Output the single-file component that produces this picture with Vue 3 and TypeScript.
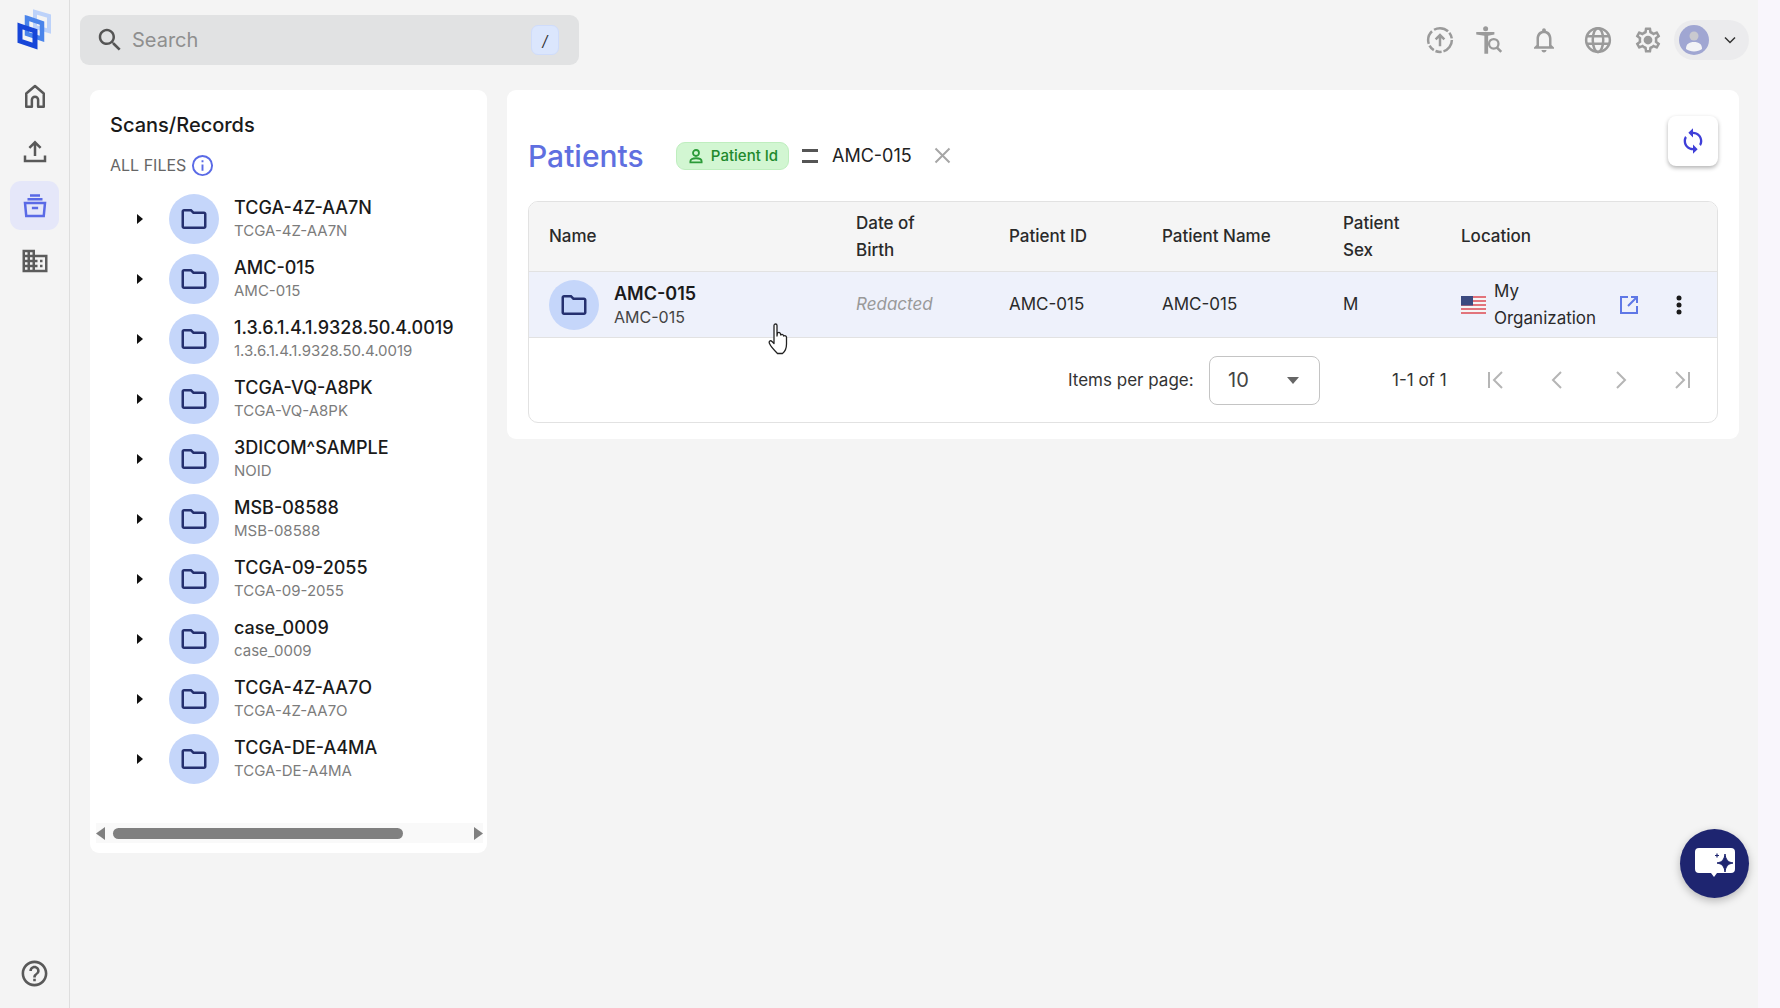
<script setup lang="ts">
interface TreeItem {
  title: string
  sub: string
}

const treeItems: TreeItem[] = [
  { title: 'TCGA-4Z-AA7N', sub: 'TCGA-4Z-AA7N' },
  { title: 'AMC-015', sub: 'AMC-015' },
  { title: '1.3.6.1.4.1.9328.50.4.0019', sub: '1.3.6.1.4.1.9328.50.4.0019' },
  { title: 'TCGA-VQ-A8PK', sub: 'TCGA-VQ-A8PK' },
  { title: '3DICOM^SAMPLE', sub: 'NOID' },
  { title: 'MSB-08588', sub: 'MSB-08588' },
  { title: 'TCGA-09-2055', sub: 'TCGA-09-2055' },
  { title: 'case_0009', sub: 'case_0009' },
  { title: 'TCGA-4Z-AA7O', sub: 'TCGA-4Z-AA7O' },
  { title: 'TCGA-DE-A4MA', sub: 'TCGA-DE-A4MA' },
]

const folderPath =
  'M20 6h-8l-2-2H4c-1.1 0-2 .9-2 2v12c0 1.1.9 2 2 2h16c1.1 0 2-.9 2-2V8c0-1.1-.9-2-2-2zm0 12H4V6h5.17l2 2H20v10z'
</script>

<template>
  <div class="page">
    <aside class="rail">
      <div class="logo">
        <svg width="60" height="60" viewBox="0 0 60 60" fill="none">
          <polygon points="33,12 47,16 47,31 33,27" stroke="#bcd2fa" stroke-width="4" />
          <polygon points="25,18 40,23 40,39 25,34" stroke="#4a84ea" stroke-width="4.5" />
          <polygon points="18,26 33,31 33,46 18,41" stroke="#1746d8" stroke-width="5" />
        </svg>
      </div>
      <div class="rail-item">
        <svg width="30" height="30" viewBox="0 0 24 24" fill="none" stroke="#595959" stroke-width="2">
          <path d="M5 20.5V10l7-6 7 6v10.5h-4.5V15a2.5 2.5 0 0 0-5 0v5.500z" stroke-linejoin="round" />
        </svg>
      </div>
      <div class="rail-item">
        <svg width="30" height="30" viewBox="0 0 24 24" fill="none" stroke="#595959" stroke-width="2">
          <path d="M12 16V5M7.500 9.500 12 5l4.500 4.500M4 15.500V20h16v-4.500" />
        </svg>
      </div>
      <div class="rail-item active">
        <svg width="30" height="30" viewBox="0 0 24 24" fill="none" stroke="#5a6ae6" stroke-width="2">
          <path d="M4 9.500h16l-1 10.500H5zM6 6.500h12M8 3.500h8M9.500 13.500h5" />
        </svg>
      </div>
      <div class="rail-item">
        <svg width="30" height="30" viewBox="0 0 24 24" fill="#5c5c5c">
          <path
            d="M12 7V3H2v18h20V7H12zM6 19H4v-2h2v2zm0-4H4v-2h2v2zm0-4H4V9h2v2zm0-4H4V5h2v2zm4 12H8v-2h2v2zm0-4H8v-2h2v2zm0-4H8V9h2v2zm0-4H8V5h2v2zm10 12h-8v-2h2v-2h-2v-2h2v-2h-2V9h8v10zm-2-8h-2v2h2v-2zm0 4h-2v2h2v-2z"
          />
        </svg>
      </div>
      <div class="rail-item help">
        <svg width="31" height="31" viewBox="0 0 24 24" fill="#595959">
          <path
            d="M11 18h2v-2h-2v2zm1-16C6.480 2 2 6.480 2 12s4.480 10 10 10 10-4.480 10-10S17.520 2 12 2zm0 18c-4.410 0-8-3.590-8-8s3.590-8 8-8 8 3.590 8 8-3.590 8-8 8zm0-14c-2.210 0-4 1.790-4 4h2c0-1.100.9-2 2-2s2 .9 2 2c0 2-3 1.750-3 5h2c0-2.250 3-2.500 3-5 0-2.210-1.790-4-4-4z"
          />
        </svg>
      </div>
    </aside>

    <div class="content">
      <header class="topbar">
        <div class="search">
          <svg width="30" height="30" viewBox="0 0 24 24" fill="#555">
            <path
              d="M15.500 14h-.79l-.28-.27C15.410 12.590 16 11.110 16 9.500 16 5.910 13.090 3 9.500 3S3 5.910 3 9.500 5.910 16 9.500 16c1.610 0 3.090-.59 4.230-1.570l.27.28v.79l5 4.990L20.490 19l-4.990-5zm-6 0C7.010 14 5 11.990 5 9.500S7.010 5 9.500 5 14 7.010 14 9.500 11.990 14 9.500 14z"
            />
          </svg>
          <span class="search-text">Search</span>
          <span class="slash">/</span>
        </div>
        <div class="top-actions">
          <svg class="top-icon" width="30" height="30" viewBox="0 0 24 24" fill="none" stroke="#9a9a9a" stroke-width="2">
            <circle cx="12" cy="12" r="9.500" stroke-dasharray="12 1.500 5 1.500 5 1.500 11 2" />
            <path d="M12 17V8M8.500 11.500 12 8l3.500 3.500" />
          </svg>
          <svg class="top-icon" width="30" height="30" viewBox="0 0 24 24" fill="#9a9a9a">
            <circle cx="8.500" cy="3" r="2" />
            <path d="M1 5.500h14.500v2l-5 1V23H7.500V8.500l-6.500-1z" />
            <circle cx="15" cy="15" r="3.800" fill="none" stroke="#9a9a9a" stroke-width="1.800" />
            <path d="m17.500 18 3.500 3.500" stroke="#9a9a9a" stroke-width="2" />
          </svg>
          <svg class="top-icon wide" width="30" height="30" viewBox="0 0 24 24" fill="#9a9a9a">
            <path
              d="M12 22c1.100 0 2-.9 2-2h-4c0 1.100.9 2 2 2zm6-6v-5c0-3.070-1.630-5.640-4.500-6.320V4c0-.83-.67-1.500-1.500-1.500s-1.500.67-1.500 1.500v.68C7.640 5.360 6 7.920 6 11v5l-2 2v1h16v-1l-2-2zm-2 1H8v-6c0-2.480 1.510-4.500 4-4.500s4 2.020 4 4.500v6z"
            />
          </svg>
          <svg class="top-icon wide" width="30" height="30" viewBox="0 0 24 24" fill="none" stroke="#9a9a9a" stroke-width="2">
            <circle cx="12" cy="12" r="9.500" />
            <ellipse cx="12" cy="12" rx="4.200" ry="9.500" />
            <path d="M3 9h18M3 15h18" />
          </svg>
          <svg class="top-icon" width="30" height="30" viewBox="0 0 24 24" fill="#9a9a9a">
            <path
              d="M19.430 12.980c.04-.32.07-.64.07-.98 0-.34-.03-.66-.07-.98l2.110-1.650c.19-.15.24-.42.12-.64l-2-3.460c-.09-.16-.26-.25-.44-.25-.06 0-.12.01-.17.03l-2.490 1c-.52-.4-1.080-.73-1.690-.98l-.38-2.650C14.460 2.180 14.250 2 14 2h-4c-.25 0-.46.18-.49.42l-.38 2.650c-.61.25-1.170.59-1.690.98l-2.490-1c-.06-.02-.12-.03-.18-.03-.17 0-.34.09-.43.25l-2 3.460c-.13.22-.07.49.12.64l2.110 1.650c-.04.32-.07.65-.07.98 0 .33.03.66.07.98l-2.110 1.650c-.19.15-.24.42-.12.64l2 3.460c.09.16.26.25.44.25.06 0 .12-.01.17-.03l2.490-1c.52.4 1.080.73 1.690.98l.38 2.650c.03.24.24.42.49.42h4c.25 0 .46-.18.49-.42l.38-2.650c.61-.25 1.170-.59 1.690-.98l2.490 1c.06.02.12.03.18.03.17 0 .34-.09.43-.25l2-3.460c.12-.22.07-.49-.12-.64l-2.110-1.650zm-1.980-1.710c.04.31.05.52.05.73 0 .21-.02.43-.05.73l-.14 1.130.89.7 1.080.84-.7 1.210-1.270-.51-1.040-.42-.9.68c-.43.32-.84.56-1.250.73l-1.060.43-.16 1.130-.2 1.350h-1.400l-.19-1.350-.16-1.130-1.060-.43c-.43-.18-.83-.41-1.230-.71l-.91-.7-1.060.43-1.270.51-.7-1.210 1.080-.84.89-.7-.14-1.130c-.03-.31-.05-.54-.05-.74s.02-.43.05-.73l.14-1.130-.89-.7-1.080-.84.7-1.210 1.270.51 1.040.42.9-.68c.43-.32.84-.56 1.250-.73l1.060-.43.16-1.130.2-1.350h1.390l.19 1.350.16 1.130 1.060.43c.43.18.83.41 1.230.71l.91.7 1.060-.43 1.270-.51.7 1.210-1.070.85-.89.7.14 1.130z"
            />
            <circle cx="12" cy="12" r="3.500" />
          </svg>
          <div class="user-chip">
            <svg width="30" height="30" viewBox="0 0 30 30">
              <circle cx="15" cy="15" r="15" fill="#a0a6d2" />
              <circle cx="15" cy="11" r="4.500" fill="#c9c9cf" />
              <path d="M7 24c0-5 3-7 8-7s8 2 8 7c-2 1.500-5 2.500-8 2.500s-6-1-8-2.500z" fill="#f3f3f6" />
            </svg>
            <svg width="14" height="10" viewBox="0 0 14 10" fill="none" stroke="#333" stroke-width="1.500">
              <path d="m2 2.500 5 5 5-5" />
            </svg>
          </div>
        </div>
      </header>

      <main class="panels">
        <section class="tree-panel">
          <h2 class="tree-title">Scans/Records</h2>
          <div class="all-files">
            <span>ALL FILES</span>
            <svg width="23" height="23" viewBox="0 0 24 24" fill="none" stroke="#5a6ae6" stroke-width="2">
              <circle cx="12" cy="12" r="10" />
              <path d="M12 11v6.500M12 6.500v2" />
            </svg>
          </div>
          <div class="tree-list">
            <div v-for="item in treeItems" :key="item.title" class="tree-row">
              <svg class="caret" width="8" height="12" viewBox="0 0 8 12" fill="#111">
                <path d="M1 1v10l6-5z" />
              </svg>
              <div class="folder">
                <svg width="30" height="30" viewBox="0 0 24 24" fill="#25306f"><path :d="folderPath" /></svg>
              </div>
              <div class="tree-text">
                <div class="tree-name">{{ item.title }}</div>
                <div class="tree-sub">{{ item.sub }}</div>
              </div>
            </div>
          </div>
          <div class="scrollbar">
            <svg width="10" height="13" viewBox="0 0 10 13" fill="#808080"><path d="M9 0v13L0 6.500z" /></svg>
            <div class="scroll-track"><div class="scroll-thumb"></div></div>
            <svg width="10" height="13" viewBox="0 0 10 13" fill="#808080"><path d="M1 0v13l9-6.500z" /></svg>
          </div>
        </section>

        <section class="patients-panel">
          <div class="patients-head">
            <h1 class="patients-title">Patients</h1>
            <div class="chip">
              <svg width="18" height="18" viewBox="0 0 24 24" fill="none" stroke="#2b9a38" stroke-width="2.400">
                <circle cx="12" cy="8" r="4" />
                <path d="M4.500 20.500v-1.500c0-2.500 3-4 7.500-4s7.500 1.500 7.500 4v1.500z" />
              </svg>
              <span>Patient Id</span>
            </div>
            <span class="equals"></span>
            <span class="filter-value">AMC-015</span>
            <svg class="filter-x" width="17" height="17" viewBox="0 0 17 17" stroke="#a6a6a6" stroke-width="2">
              <path d="m1.500 1.500 14 14M15.500 1.500l-14 14" />
            </svg>
            <button class="refresh">
              <svg width="28" height="28" viewBox="0 0 24 24" fill="#3f3fd8">
                <path
                  d="M12 4V1L8 5l4 4V6c3.310 0 6 2.690 6 6 0 1.010-.25 1.970-.7 2.800l1.460 1.460C19.540 15.030 20 13.570 20 12c0-4.420-3.580-8-8-8zm0 14c-3.310 0-6-2.690-6-6 0-1.010.25-1.970.7-2.800L5.240 7.740C4.460 8.970 4 10.430 4 12c0 4.420 3.580 8 8 8v3l4-4-4-4v3z"
                />
              </svg>
            </button>
          </div>

          <div class="table">
            <div class="table-row head">
              <div class="cell">Name</div>
              <div class="cell">Date of<br />Birth</div>
              <div class="cell">Patient ID</div>
              <div class="cell">Patient Name</div>
              <div class="cell">Patient<br />Sex</div>
              <div class="cell">Location</div>
            </div>
            <div class="table-row body">
              <div class="cell name-cell">
                <div class="folder">
                  <svg width="30" height="30" viewBox="0 0 24 24" fill="#25306f"><path :d="folderPath" /></svg>
                </div>
                <div class="tree-text">
                  <div class="row-name">AMC-015</div>
                  <div class="row-sub">AMC-015</div>
                </div>
              </div>
              <div class="cell redacted">Redacted</div>
              <div class="cell">AMC-015</div>
              <div class="cell">AMC-015</div>
              <div class="cell">M</div>
              <div class="cell location">
                <svg class="flag" width="25" height="18" viewBox="0 0 25 18">
                  <rect width="25" height="18" fill="#f5f5f5" />
                  <path d="M0 1h25M0 5h25M0 9h25M0 13h25M0 17h25" stroke="#e2747c" stroke-width="2" />
                  <rect width="12" height="9.500" fill="#3b4a80" />
                </svg>
                <span class="org">My<br />Organization</span>
                <svg class="open" width="24" height="24" viewBox="0 0 24 24" fill="none" stroke="#5f78e6" stroke-width="2">
                  <path d="M11 4H4v16h16v-7M14 4h6v6M20 4l-9 9" />
                </svg>
                <svg class="more" width="6" height="20" viewBox="0 0 6 20" fill="#1a1a1a">
                  <circle cx="3" cy="3" r="2.500" />
                  <circle cx="3" cy="10" r="2.500" />
                  <circle cx="3" cy="17" r="2.500" />
                </svg>
              </div>
            </div>
            <div class="pager">
              <span class="per-page">Items per page:</span>
              <div class="select">
                <span>10</span>
                <svg width="12" height="7" viewBox="0 0 12 7" fill="#666"><path d="M0 0h12L6 7z" /></svg>
              </div>
              <span class="range">1-1 of 1</span>
              <div class="pager-icons">
                <svg width="22" height="22" viewBox="0 0 22 22" fill="none" stroke="#b5b5b5" stroke-width="2">
                  <path d="M4 3v16M17 3l-8 8 8 8" />
                </svg>
                <svg width="22" height="22" viewBox="0 0 22 22" fill="none" stroke="#b5b5b5" stroke-width="2">
                  <path d="m14 3-8 8 8 8" />
                </svg>
                <svg width="22" height="22" viewBox="0 0 22 22" fill="none" stroke="#b5b5b5" stroke-width="2">
                  <path d="m8 3 8 8-8 8" />
                </svg>
                <svg width="22" height="22" viewBox="0 0 22 22" fill="none" stroke="#b5b5b5" stroke-width="2">
                  <path d="M18 3v16M5 3l8 8-8 8" />
                </svg>
              </div>
            </div>
          </div>
        </section>
      </main>
    </div>

    <div class="edge-strip"></div>

    <svg class="cursor" width="24" height="32" viewBox="0 0 24 32" fill="#fff" stroke="#222" stroke-width="1.300">
      <path
        d="M6 2.500c0-2 3-2 3 0V13l.5-3c1.500-1 2.800-.5 3 1l.3 1c1-1 2.700-.6 2.900 1 1-.7 2.700-.3 2.800 1.300V21c0 4-2 8-4 9.500H9.500C7 28 3 24 1.500 20.500c-1-2.300 1-3.500 2.500-2l2 2z"
        stroke-linejoin="round"
      />
    </svg>
    <div class="chat">
      <svg width="44" height="40" viewBox="0 0 44 40">
        <path
          d="M6 4h32a4 4 0 0 1 4 4v17a4 4 0 0 1-4 4H24l-3 4-3-4H6a4 4 0 0 1-4-4V8a4 4 0 0 1 4-4z"
          fill="#fff"
        />
        <path d="M32 10c.8 5.500 2.500 8 8 9-5.500 1-7.200 3.500-8 9-.8-5.500-2.500-8-8-9 5.500-1 7.200-3.500 8-9z" fill="#1e2570" stroke="#1e2570" />
        <path d="M24 9.500v4M22 11.500h4" stroke="#1e2570" stroke-width="1.200" />
      </svg>
    </div>
  </div>
</template>

<style>
html,
body {
  margin: 0;
  background: #f4f4f4;
}
</style>

<style scoped>
.page {
  display: flex;
  height: 1008px;
  overflow: hidden;
  font-family: Inter, "Noto Sans", sans-serif;
  background: #f4f4f4;
  color: #1c1c1c;
}
.rail {
  width: 69px;
  flex-shrink: 0;
  border-right: 1px solid #dedede;
  display: flex;
  flex-direction: column;
  gap: 6px;
  padding-bottom: 10px;
  box-sizing: content-box;
}
.logo {
  height: 65px;
}
.logo svg {
  display: block;
  margin: 0 0 0 2px;
}
.rail-item {
  width: 49px;
  height: 49px;
  margin-left: 10px;
  border-radius: 11px;
  display: flex;
  align-items: center;
  justify-content: center;
}
.rail-item.active {
  background: #e5e7f9;
}
.rail-item.help {
  margin-top: auto;
}
.content {
  flex: 1;
  min-width: 0;
  display: flex;
  flex-direction: column;
}
.topbar {
  height: 80px;
  margin-bottom: 10px;
  padding: 0 9px 0 10px;
  display: flex;
  align-items: center;
  justify-content: space-between;
}
.search {
  width: 499px;
  height: 50px;
  box-sizing: border-box;
  padding: 0 20px 0 15px;
  border-radius: 9px;
  background: #e1e2e3;
  display: flex;
  align-items: center;
  gap: 7px;
}
.search-text {
  flex: 1;
  font-size: 20px;
  color: #8f8f8f;
}
.slash {
  width: 26px;
  height: 28px;
  border: 1px solid #cfdcfb;
  border-radius: 7px;
  background: #dbe6fd;
  color: #333;
  font-size: 15px;
  font-style: italic;
  display: flex;
  align-items: center;
  justify-content: center;
}
.top-actions {
  display: flex;
  align-items: center;
}
.top-icon {
  margin-right: 20px;
}
.top-icon.wide {
  margin-left: 4px;
}
.top-icon:last-of-type {
  margin-right: 11px;
}
.user-chip {
  width: 75px;
  height: 40px;
  border-radius: 20px;
  background: #ebebed;
  box-sizing: border-box;
  padding: 0 12px 0 5px;
  display: flex;
  align-items: center;
  justify-content: space-between;
}
.panels {
  display: flex;
  gap: 20px;
  align-items: flex-start;
  padding: 0 19px 0 20px;
}
.tree-panel {
  width: 397px;
  height: 763px;
  flex-shrink: 0;
  box-sizing: border-box;
  background: #fff;
  border-radius: 9px;
  padding: 23px 0 0 20px;
  display: flex;
  flex-direction: column;
}
.tree-title {
  margin: 0;
  font-size: 20px;
  line-height: 24px;
  font-weight: 500;
  color: #1a1a1a;
}
.all-files {
  margin-top: 16px;
  display: flex;
  align-items: center;
  gap: 5px;
  font-size: 16px;
  color: #666;
  line-height: 24px;
}
.tree-list {
  margin-top: 12px;
  flex: 1;
}
.tree-row {
  height: 60px;
  display: flex;
  align-items: center;
}
.caret {
  margin-left: 26px;
  margin-right: 25px;
}
.folder {
  width: 50px;
  height: 50px;
  border-radius: 50%;
  background: #c5d6fa;
  flex-shrink: 0;
  display: flex;
  align-items: center;
  justify-content: center;
}
.tree-text {
  margin-left: 15px;
  min-width: 0;
}
.tree-name {
  font-size: 18px;
  line-height: 24px;
  font-weight: 500;
  color: #1a1a1a;
  white-space: nowrap;
}
.tree-sub {
  font-size: 15px;
  line-height: 22px;
  color: #7c7c7c;
  white-space: nowrap;
}
.scrollbar {
  height: 20px;
  margin: 0 4px 10px -14px;
  display: flex;
  align-items: center;
  justify-content: space-between;
  background: #f9f9f9;
}
.scroll-track {
  flex: 1;
  padding: 0 70px 0 7px;
}
.scroll-thumb {
  height: 11px;
  border-radius: 6px;
  background: #808080;
}
.patients-panel {
  flex: 1;
  min-width: 0;
  height: 349px;
  box-sizing: border-box;
  background: #fff;
  border-radius: 9px;
  padding: 20px 21px;
}
.patients-head {
  height: 91px;
  display: flex;
  align-items: center;
  position: relative;
}
.patients-title {
  margin: 0;
  width: 148px;
  font-size: 30px;
  font-weight: 500;
  color: #5f6fe0;
  line-height: 1;
}
.chip {
  width: 113px;
  height: 28px;
  box-sizing: border-box;
  border: 1px solid #bfeebf;
  border-radius: 9px;
  background: #d2f6d2;
  color: #20892c;
  font-size: 15px;
  font-weight: 500;
  display: flex;
  align-items: center;
  justify-content: center;
  gap: 6px;
}
.equals {
  width: 16px;
  height: 8px;
  margin-left: 13px;
  border-top: 3px solid #555;
  border-bottom: 3px solid #555;
}
.filter-value {
  margin-left: 14px;
  font-size: 18px;
  color: #222;
}
.filter-x {
  margin-left: 22px;
}
.refresh {
  margin-left: auto;
  margin-top: -30px;
  width: 50px;
  height: 50px;
  padding: 0;
  border: 0;
  border-radius: 8px;
  background: #fff;
  box-shadow: 0 2px 4px rgba(0, 0, 0, 0.3);
  display: flex;
  align-items: center;
  justify-content: center;
}
.table {
  border: 1px solid #e2e2e2;
  border-radius: 10px;
  overflow: hidden;
}
.table-row {
  display: grid;
  grid-template-columns: 307px 153px 153px 181px 118px 1fr;
  align-items: center;
}
.table-row.head {
  height: 69px;
  background: #f5f5f5;
  border-bottom: 1px solid #e2e2e2;
  font-weight: 500;
}
.table-row.body {
  height: 65px;
  background: #eef1fb;
  border-bottom: 1px solid #e2e2e2;
}
.cell {
  padding-left: 20px;
  font-size: 17px;
  line-height: 27px;
  color: #2a2a2a;
}
.name-cell {
  display: flex;
  align-items: center;
}
.row-name {
  font-size: 18px;
  line-height: 24px;
  font-weight: 600;
  color: #1a1a1a;
}
.row-sub {
  font-size: 16px;
  line-height: 22px;
  color: #444;
}
.redacted {
  font-style: italic;
  color: #999;
}
.location {
  display: flex;
  align-items: center;
}
.flag {
  flex-shrink: 0;
}
.org {
  margin-left: 8px;
  width: 128px;
}
.open {
  margin-left: -5px;
}
.more {
  margin-left: 35px;
}
.pager {
  height: 84px;
  display: flex;
  align-items: center;
  padding-left: 539px;
  font-size: 17px;
  color: #333;
}
.per-page {
  width: 141px;
  white-space: nowrap;
}
.select {
  width: 111px;
  height: 49px;
  box-sizing: border-box;
  border: 1px solid #c4c4c4;
  border-radius: 8px;
  padding: 0 20px 0 18px;
  display: flex;
  align-items: center;
  justify-content: space-between;
  font-size: 20px;
  color: #444;
}
.range {
  margin-left: 72px;
  width: 53px;
  white-space: nowrap;
}
.pager-icons {
  margin-left: 40px;
  display: flex;
  gap: 40px;
}
.edge-strip {
  width: 22px;
  flex-shrink: 0;
  background: #f9f6fc;
}
.cursor {
  position: absolute;
  left: 768px;
  top: 323px;
}
.chat {
  position: absolute;
  left: 1680px;
  top: 829px;
  width: 69px;
  height: 69px;
  border-radius: 50%;
  background: #1e2570;
  box-shadow: 0 3px 8px rgba(0, 0, 0, 0.25);
  display: flex;
  align-items: center;
  justify-content: center;
}
</style>
